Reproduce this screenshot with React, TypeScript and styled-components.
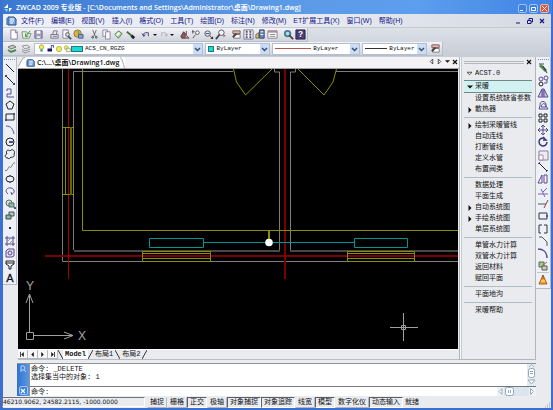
import React from "react";
import styled, { createGlobalStyle } from "styled-components";

const SANS = '"Liberation Sans", "Noto Sans CJK SC", sans-serif';
const MONO = '"Liberation Mono", "Noto Sans CJK SC", monospace';
const BOLD = '"Open Sans", "Noto Sans CJK SC", sans-serif';

const GlobalStyle = createGlobalStyle`
  * { box-sizing: border-box; }
  html, body, #root { height: 100%; margin: 0; }
  body { font-family: ${SANS}; font-size: 7px; line-height: 10px; color: #111; overflow: hidden; }
  button, select, input { font: inherit; color: inherit; margin: 0; padding: 0; border: 0; background: none; border-radius: 0; }
  svg { display: block; flex: none; }
`;

const Window = styled.div`
  height: 100vh;
  display: flex;
  flex-direction: column;
  background: #e9ebef;
  border: solid #3b70d2;
  border-width: 0 2px 2px 3px;
`;

const TitleBar = styled.header`
  flex: none;
  height: 14px;
  display: flex;
  align-items: center;
  gap: 2px;
  padding: 2px 3px 0 0;
  margin: 0 -1px;
  background: linear-gradient(90deg, #3b78d2, #5a98e4 45%, #5c9fee 75%, #3f83e4);
  color: #fff;
`;

const Title = styled.h1`
  flex: 1;
  margin: 0;
  font: 600 7px/12px ${BOLD};
  white-space: nowrap;
  overflow: hidden;
`;

const WindowButton = styled.button<{ $close?: boolean }>`
  width: 9px;
  height: 9px;
  border: 1px solid ${(p) => (p.$close ? "#f0b8a8" : "#9cc4f4")};
  border-radius: 2px;
  background: ${(p) => (p.$close ? "#d9543a" : "#3f7fe0")};
`;

const MenuBar = styled.nav`
  flex: none;
  height: 14px;
  display: flex;
  align-items: center;
  gap: 7px;
  padding: 0 3px;
  background: linear-gradient(90deg, #edf0f7, #e6e9f0 60%, #d5d9e2);
  border-bottom: 1px solid #c5c9d2;
  color: #16168a;
`;

const MenuIcon = styled.span`
  margin-right: -4px;
`;

const MenuButton = styled.button`
  white-space: nowrap;
`;

const MdiButtons = styled.div`
  display: flex;
  margin-left: auto;
`;

const ToolArea = styled.div`
  flex: none;
  padding-bottom: 1px;
  background: linear-gradient(#dde0e7, #c7ccd6);
`;

const ToolBar = styled.div`
  width: max-content;
  height: 14px;
  display: flex;
  align-items: center;
  gap: 4px;
  padding: 0 1px 0 5px;
  background: linear-gradient(#f3f4f7, #cfd3db);
  border: solid #b9bec8;
  border-width: 0 1px 1px 0;
`;

const ToolGroup = styled.div`
  display: flex;
`;

const ToolButton = styled.button<{ $narrow?: boolean }>`
  flex: none;
  width: ${(p) => (p.$narrow ? 5 : 12)}px;
  height: 12px;
  display: flex;
  align-items: center;
  justify-content: center;
`;

const PropertyBar = styled(ToolBar)`
  gap: 2px;
  width: 440px;
  max-width: 100%;
  padding: 0 1px 0 3px;
`;

const Combo = styled.label<{ $grow: number }>`
  flex: ${(p) => p.$grow} 1 0;
  min-width: 0;
  height: 12px;
  display: flex;
  align-items: center;
  padding-left: 2px;
  background: #fff;
  border: 1px solid #b4c0d2;
`;

const ComboSelect = styled.select`
  flex: 1;
  min-width: 0;
  height: 10px;
  appearance: none;
  padding-left: 2px;
  font: 6px/10px ${MONO};
`;

const LineSample = styled.span<{ $color: string; $short?: boolean }>`
  width: ${(p) => (p.$short ? 22 : 36)}px;
  height: 1px;
  background: ${(p) => p.$color};
`;

const Swatch = styled.span<{ $wide?: boolean }>`
  width: ${(p) => (p.$wide ? 12 : 6)}px;
  height: 6px;
  background: #14dcdc;
  border: 1px solid #247878;
`;

const Main = styled.div`
  flex: 1;
  min-height: 0;
  display: flex;
`;

const SideBar = styled.div<{ $right?: boolean }>`
  flex: none;
  align-self: flex-start;
  width: ${(p) => (p.$right ? 15 : 14)}px;
  display: flex;
  flex-direction: column;
  align-items: center;
  padding-top: 2px;
  background: #edf0f5;
  border: solid #b4b9c4;
  border-width: 0 1px 1px 0;
`;

const SideGrip = styled.span`
  width: 11px;
  height: 3px;
  border-top: 1px dotted #8091b4;
`;

const SideTools = styled.div<{ $right?: boolean }>`
  height: ${(p) => (p.$right ? 210 : 222)}px;
  display: grid;
  grid-auto-rows: 1fr;
  align-items: center;
`;

const ExtraTool = styled.div`
  padding: 1px 0 2px;
  border-top: 1px solid #b9c6cc;
`;

const Workspace = styled.div`
  flex: 1;
  min-width: 0;
  display: flex;
  flex-direction: column;
`;

const WorkRow = styled.div`
  flex: 1;
  min-height: 0;
  display: flex;
`;

const Document = styled.section`
  flex: 1;
  min-width: 0;
  display: flex;
  flex-direction: column;
  margin-left: 1px;
`;

const DocBar = styled.div`
  flex: none;
  height: 12px;
  display: flex;
  align-items: flex-start;
  background: #f3f3f5;
  border-bottom: 1px solid #a2a4a6;
`;

const DocTab = styled.button`
  height: 11px;
  display: flex;
  align-items: center;
  gap: 1px;
  background: #fff;
  font: 600 7px/11px ${BOLD};
  white-space: nowrap;
`;

const DocNav = styled.div`
  display: flex;
  gap: 2px;
  margin-left: auto;
  padding: 0 1px;
`;

const DocNavButton = styled.button`
  width: 6px;
  height: 9px;
  display: flex;
  align-items: center;
  justify-content: center;
`;

const Canvas = styled.div`
  flex: 1;
  min-height: 0;
  margin-right: 1px;
  background: #000;

  svg { width: 100%; height: 100%; }
`;

const LayoutTabs = styled.div`
  flex: none;
  height: 11px;
  display: flex;
  align-items: flex-start;
  border-top: 1px solid #fff;
  border-bottom: 1px solid #b8bcc4;
`;

const LayoutNav = styled.button`
  width: 10px;
  height: 9px;
  display: flex;
  align-items: center;
  justify-content: center;
  background: #f6f6f8;
  border: solid #b4b6bc;
  border-width: 0 1px 1px 0;
`;

const LayoutTab = styled.button<{ $active?: boolean }>`
  height: 9px;
  padding: 0 2px;
  background: ${(p) => (p.$active ? "#fff" : "transparent")};
  font: ${(p) => (p.$active ? "bold" : "normal")} 7px/9px ${MONO};
`;

const Panel = styled.aside`
  flex: none;
  width: 77px;
  padding: 0 3px 0 4px;
  border: solid #b0b6bc;
  border-width: 0 1px 1px;
  box-shadow: inset 1px 0 #f8f8f8, inset 2px 0 #c4cad0;
`;

const PanelHead = styled.div`
  height: 10px;
  display: flex;
  align-items: center;
  gap: 2px;
`;

const PanelGrip = styled.span`
  flex: 1;
  height: 3px;
  border: solid #b4b8be;
  border-width: 1px 0;
`;

const PanelRow = styled.button<{ $selected?: boolean; $head?: boolean }>`
  width: 100%;
  height: ${(p) => (p.$selected || p.$head ? 13 : 11)}px;
  display: flex;
  align-items: center;
  white-space: nowrap;
  font: 7px/11px ${MONO};
  background: ${(p) => (p.$selected ? "#d2f2f2" : "transparent")};
  border: solid ${(p) => (p.$selected ? "#6f8888" : "transparent")};
  border-width: ${(p) => (p.$selected ? "1px 0" : "0")};
`;

const PanelMark = styled.span`
  width: 11px;
  padding-left: 3px;
`;

const PanelRule = styled.hr`
  margin: 2px 0;
  border: 0;
  border-top: 1px solid #b3bcc2;
`;

const CommandBox = styled.section`
  flex: none;
  height: 33px;
  display: flex;
  margin-top: 3px;
  background: #fff;
  border-top: 1px solid #8e9298;
`;

const CommandGrip = styled.div`
  width: 12px;
  display: flex;
  flex-direction: column;
  align-items: center;
  justify-content: space-between;
  padding: 1px 0;
  background: linear-gradient(90deg, #2f72cc, #5a98e8);
`;

const CommandBody = styled.div`
  flex: 1;
  min-width: 0;
  display: flex;
  flex-direction: column;
  border-left: 1px solid #8e9298;
  font: 7px/8px ${MONO};
`;

const CommandHistory = styled.div`
  flex: 1;
  display: flex;
  border-bottom: 1px solid #74787e;
`;

const CommandLog = styled.p`
  flex: 1;
  margin: 0;
  padding: 1px;
  white-space: pre-line;
`;

const CommandLine = styled.label`
  height: 9px;
  display: flex;
  align-items: center;
  gap: 2px;
  padding-left: 1px;
`;

const CommandInput = styled.input`
  flex: 1;
  min-width: 0;
  height: 8px;
  outline: 0;
`;

const StatusBar = styled.footer`
  flex: none;
  height: 12px;
  display: flex;
  align-items: center;
  margin-left: -1px;
`;

const Coordinates = styled.output`
  width: 143px;
  height: 10px;
  margin-right: 2px;
  border: 1px solid;
  border-color: #70747a #fff #fff #70747a;
  font: 6px/8px "DejaVu Sans", sans-serif;
  white-space: nowrap;
`;

const StatusButton = styled.button<{ $on?: boolean }>`
  height: 11px;
  padding: 0 2px;
  border: 1px solid;
  border-color: ${(p) => (p.$on ? "#5c6066 #fff #fff #5c6066" : "transparent #b4b8be #b4b8be transparent")};
  font: 7px/8px ${SANS};
  white-space: nowrap;
`;

const StatusText = styled.span`
  padding: 0 2px;
`;

const ResizeGrip = styled.span`
  margin-left: auto;
  align-self: flex-end;
`;

const P = "#5a4a90";
const D = "#222";
const G = "#4c8c4c";

const art: Record<string, React.ReactNode> = {
  app: <><path d="M2 6 6 2v4zM7 10l3-4H7z" fill="#fff" /><path d="M5 10 2 7h4z" fill="#6de0d0" /></>,
  doc: <><path d="M2 2h6l2 2v6H2z" fill="#79a8dc" stroke="#2b4a8c" /><path d="M4 4h4M4 6h4M4 8h3" stroke="#fff" /><path d="M1 3v7" stroke="#35589c" /></>,
  page: <path d="M2 1h5l2 2v8H2zM7 1v3h2" fill="#fdfdff" stroke="#85809c" />,
  open: <><path d="M1 3h5l1 2h4L9 10H2z" fill="#e8eddc" stroke="#7c9672" /><path d="m5 8 5-6M5 8h3M5 8V5" stroke="#318c3c" /></>,
  save: <><path d="M2 2h8v8H2z" fill="#a49fc0" stroke="#6d668c" /><path d="M4 2h4v3H4z" fill="#fff" /><path d="M4 8h4v2H4z" fill="#eee" /></>,
  print: <><path d="M2 6h8v4H2zM4 6l1-4h4L8 6" fill="#e8e6ee" stroke="#777090" /><path d="M4 8h5" stroke="#777090" /></>,
  preview: <><path d="M2 1h6v9H2z" fill="#f8f8fc" stroke="#85809c" /><circle cx="7" cy="6" r="2" fill="#cfe4f6" stroke="#555" /><path d="m8 8 3 3" stroke="#555" strokeWidth="2" /></>,
  plot: <><circle cx="5" cy="5" r="4" fill="#e0b040" stroke="#8d7040" /><path d="M5 2a3 3 0 0 1 1 5z" fill="#4ca058" /><path d="M6 6h5v4H6z" fill="#7ba4dc" stroke="#4a5c90" /></>,
  cut: <><path d="m4 1 3 7M8 1 5 8" stroke="#666" /><circle cx="4" cy="9" r="1" stroke="#444" fill="none" /><circle cx="8" cy="9" r="1" stroke="#444" fill="none" /></>,
  copy: <><path d="M2 1h5v7H2z" fill="#f7f7fd" stroke="#8a84a4" /><path d="M5 3h5v8H5z" fill="#f7f7fd" stroke="#8a84a4" /></>,
  paste: <><path d="m2 6 4-4 4 3-4 5z" fill="#b6d8a0" stroke="#4f744c" /><path d="m4 7 3-3" stroke="#fff" strokeWidth="2" /></>,
  brush: <><path d="m2 3 5 4" stroke="#4c6c3c" strokeWidth="2" /><path d="m7 7 3 3" stroke="#222" strokeWidth="3" /></>,
  undo: <path d="M3 8V5l2-1h3v4M1 5l2 3 2-2" fill="none" stroke="#473a80" />,
  redo: <path d="M9 8V5L7 4H4v4M11 5 9 8 7 6" fill="none" stroke="#b0b0bc" />,
  pan: <><path d="m2 8 3-5 2 2v5H3z" fill="#8a5a5c" stroke="#553a44" /><path d="M8 2v5l3 3H7" fill="#c7a890" stroke="#664a50" /></>,
  zoomplus: <><circle cx="7" cy="4" r="2" fill="#fff" stroke="#555" /><path d="m5 6-3 4M1 3h3M2 1v4" stroke="#555" /></>,
  zoomwin: <><circle cx="5" cy="5" r="3" fill="#dbeaf4" stroke="#50506c" /><path d="m7 7 3 3M3 5h4" stroke="#445" strokeWidth="1" /><path d="M8 11h3V8z" fill="#333" /></>,
  zoomprev: <><circle cx="7" cy="4" r="3" fill="#f5f7fb" stroke="#50506c" /><path d="m5 6-4 5" stroke="#445" strokeWidth="2" /><path d="M9 7h2L9 9" fill="none" stroke="#b44" /></>,
  props: <><path d="M2 2h8v3H2z" fill="#e8b4a0" stroke="#7c5c68" /><path d="M3 6h7v4H3z" fill="#fff" stroke="#777" /><path d="m2 9 4-4" stroke="#444" strokeWidth="2" /></>,
  grid: <><path d="M1 1h10v10H1z" fill="#f5f5fb" stroke="#77728c" /><path d="M3 3h2M7 3h2M3 6h2M7 6h2M3 9h2M7 9h2" stroke="#55506c" strokeWidth="2" /></>,
  palette: <><path d="M5 1h5v9H5z" fill="#6c88c8" stroke="#345" /><path d="M1 10V6l3-2v6z" fill="#e4c45c" stroke="#666" /><path d="M6 3h3M6 6h3" stroke="#fff" /></>,
  table: <><path d="M1 2h10v8H1z" fill="#fff" stroke="#857c94" /><path d="M1 3h10" stroke="#b08c94" strokeWidth="2" /><path d="M3 6h6M3 8h6" stroke="#888" /></>,
  find: <><circle cx="5" cy="5" r="3" fill="#aee0ea" stroke="#467c94" strokeWidth="2" /><path d="m7 7 4 4" stroke="#444" strokeWidth="2" /></>,
  help: <path d="M1 1h10v10H1z" fill="#4c4070" stroke="#28204c" />,
  layer: <><path d="m2 4 5-2 3 2-5 2z" fill="#ccc" stroke="#777" /><path d="m2 7 3 2 5-2" fill="none" stroke={G} strokeWidth="2" /></>,
  layer2: <path d="m2 3 5-1 3 2-5 2zM2 6l3 2 5-2M2 8l3 2 5-2" fill="#e5e5ea" stroke="#999" />,
  bulb: <><circle cx="6" cy="4" r="3" fill="#f4ec50" stroke="#9a9a50" /><path d="M6 7v3" stroke="#3a90a0" strokeWidth="3" /></>,
  lock: <><path d="M2 6h6v4H2z" fill="#14146c" /><path d="M7 6V2h3v3" fill="none" stroke="#14146c" /></>,
  sun: <circle cx="6" cy="6" r="4" fill="#f0ec58" stroke="#a89a44" />,
  sun2: <><circle cx="5" cy="4" r="3" fill="#f0ec58" stroke="#a89a44" /><path d="M5 5h6v5H5z" fill="#f4f4d0" stroke="#999060" /></>,
  line: <path d="m2 2 8 8" stroke={D} />,
  ray: <><path d="m2 2 8 8" stroke={D} strokeWidth="1" /><path d="M1 2h2M9 10h2" stroke="#446" strokeWidth="2" /></>,
  pline: <path d="M10 10H3V7h4V2H3v2" fill="none" stroke={P} />,
  polygon: <path d="m6 2 4 3-2 5H4L2 5z" fill="none" stroke={D} />,
  rect: <><path d="M2 3h8v6H2z" fill="none" stroke={D} /><path d="M1 9h2M9 3h2" stroke={P} strokeWidth="2" /></>,
  arc: <path d="M2 2c5 0 7 3 8 8" fill="none" stroke={P} strokeWidth="1" />,
  circle: <><circle cx="6" cy="6" r="4" fill="none" stroke={D} /><path d="M5 6h4" stroke={P} strokeWidth="2" /></>,
  cloud: <path d="M4 10C0 10 1 6 3 6 1 3 4 1 6 3c2-3 6 0 4 3 1 2-1 4-3 3-1 2-3 2-3 1z" fill="none" stroke={D} />,
  spline: <path d="M1 9c3 3 3-5 5-3s2-5 5-4" fill="none" stroke="#777" />,
  ellipse: <><ellipse cx="6" cy="6" rx="4" ry="3" fill="none" stroke={D} /><path d="M2 6h1M6 2v1M6 9v1M9 6h1" stroke={P} strokeWidth="2" /></>,
  earc: <path d="M4 9C0 6 3 2 7 3s4 5 1 6M7 7l1 3" fill="none" stroke={P} />,
  insert: <><circle cx="5" cy="5" r="3" fill="#cfe0d0" stroke="#667" /><path d="M5 5h5v4H5z" fill="#8ac08a" stroke="#567" /><path d="M11 9v2" stroke={P} strokeWidth="2" /></>,
  block: <><path d="M5 2h5v4H5z" fill="#a6d8a6" stroke="#446" /><path d="M2 5h5v4H2z" fill="#8abc8a" stroke="#446" /></>,
  point: <path d="M5 6h2" stroke="#224" strokeWidth="2" />,
  hatch: <><path d="M3 1v10M9 1v10M1 3h10M1 9h10" stroke={P} /><path d="m3 7 4-4M5 9l4-4" stroke="#99a" /></>,
  region: <><path d="M2 4 4 2h6v7l-2 1H2z" fill="#e2deee" stroke={P} /><circle cx="6" cy="6" r="2" fill="none" stroke={P} /></>,
  wipe: <path d="M2 2h8v3l-3 2v3H5V7L2 5zM2 4h8" fill="#f4f4f4" stroke={D} />,
  letter: <text x="6" y="10" textAnchor="middle" fontFamily="Liberation Sans, sans-serif" fontSize="11" fill="#111" stroke="#111" strokeWidth="0.3">A</text>,
  erase: <><path d="M2 2h5" stroke="#446" /><path d="m3 3 6 6" stroke={G} strokeWidth="3" /><path d="m6 4 4 7" stroke="#333" /></>,
  copyobj: <><circle cx="4" cy="4" r="2" fill="none" stroke={P} /><circle cx="4" cy="9" r="2" fill="none" stroke={D} /><circle cx="9" cy="3" r="2" fill="none" stroke={P} /><path d="M7 8h3V5" stroke={P} fill="none" /></>,
  mirror: <path d="M5 2v8H1zM7 2v8h4zM6 1v10" fill="#ccd" stroke={P} />,
  offset: <path d="M2 10h9L9 7C10 1 2 1 3 7zM4 8h5C8 3 5 4 4 8" fill="none" stroke={P} />,
  array: <path d="M2 2h3v3H2zM7 2h3v3H7zM2 7h3v3H2zM7 7h3v3H7z" fill="none" stroke={D} />,
  move: <path d="M6 1v10M1 6h10M4 3l2-2 2 2M4 9l2 2 2-2M3 4 1 6l2 2M9 4l2 2-2 2" fill="none" stroke={P} />,
  rotate: <path d="M10 6a4 4 0 1 1-2-3.500M6 1l3 3H6" fill="none" stroke="#3c3470" strokeWidth="1.500" />,
  scale: <><path d="M2 2h9v9H2z" fill="#f3e9ee" stroke="#8c80a4" /><path d="M2 6h4v5H2z" fill="#fff" stroke="#a08ca4" /></>,
  stretch: <><path d="m2 2 8 8" stroke={D} /><path d="m1 3 2-2M9 11l2-2" stroke={P} /></>,
  lengthen: <path d="M1 10 5 2v8zM7 10V2h3v8z" fill="#f5f5fb" stroke={P} />,
  trim: <path d="M1 8h10M4 3l4 8M6 6l4-4" stroke="#7c62b4" fill="none" />,
  extend: <><path d="M1 6h8" stroke="#555" /><path d="m7 10 4-8" stroke="#8c3c3c" strokeWidth="1" /></>,
  brk: <><path d="M2 3h8v6H2z" fill="none" stroke="#334" /><path d="M9 6h2" stroke={P} strokeWidth="2" /></>,
  brk2: <path d="M5 2H2v8h2M7 2h3v8H7" fill="none" stroke="#334" />,
  chamfer: <path d="M2 2h3l5 5v4" fill="none" stroke="#555" />,
  fillet: <path d="M1 2c5 0 9 3 9 9" fill="none" stroke={P} strokeWidth="1.500" />,
  explode: <><path d="M2 2h5v5H2z" fill="#9cc88c" stroke="#665" /><path d="M5 6h5v4H5z" fill="#d0d8a0" stroke="#556" /><path d="m6 5 4-3" stroke="#a64" /></>,
  cone: <><path d="M6 1 2 10h8z" fill="#f0a428" stroke="#b05c20" /><path d="M4 7h4" stroke="#fff090" /><path d="M6 1v4" stroke="#a43" /></>,
};

function Icon({ name, size = 12 }: { name: string; size?: number }) {
  return (
    <svg width={size} height={size} viewBox="0 0 12 12" fill="none" aria-hidden="true">
      {art[name]}
      {name === "help" && (
        <text x="6" y="9" textAnchor="middle" fontSize="9" fontWeight="bold" fill="#fff">?</text>
      )}
    </svg>
  );
}

type Dir = "left" | "right" | "down";
function Triangle({ dir, bar, hollow, size = 6 }: { dir: Dir; bar?: boolean; hollow?: boolean; size?: number }) {
  const d = { left: "M4.500 0v6L1.500 3z", right: "M1.500 0v6l3-3z", down: "M0 1.500h6l-3 3z" }[dir];
  return (
    <svg width={size} height={size} viewBox="0 0 6 6" aria-hidden="true">
      <path d={d} fill={hollow ? "#fff" : "#111"} stroke={hollow ? "#333" : "none"} />
      {bar && <path d={dir === "left" ? "M.5 0v6" : "M5.500 0v6"} stroke="#111" />}
    </svg>
  );
}

function Cross({ color = "#111" }: { color?: string }) {
  return (
    <svg width="6" height="6" viewBox="0 0 6 6" aria-hidden="true">
      <path d="m1 1 4 4M5 1 1 5" stroke={color} strokeWidth="1.200" />
    </svg>
  );
}

function DropArrow() {
  return (
    <svg width="9" height="10" viewBox="0 0 9 10" aria-hidden="true">
      <path d="M0 0h9v10H0z" fill="#cbdcf6" />
      <path d="m2 4 2.500 2.500L7 4" fill="none" stroke="#3a4c70" strokeWidth="1.500" />
    </svg>
  );
}

const menus = ["文件(F)", "编辑(E)", "视图(V)", "插入(I)", "格式(O)", "工具(T)", "绘图(D)", "标注(N)", "修改(M)", "ET扩展工具(X)", "窗口(W)", "帮助(H)"];

const toolGroups = [
  ["page", "open", "save"],
  ["print", "preview", "plot"],
  ["cut", "copy", "paste", "brush"],
  ["undo", "drop", "redo", "drop"],
  ["pan", "zoomplus", "zoomwin", "zoomprev"],
  ["props", "grid", "palette", "table"],
  ["find", "help"],
];

const drawTools = ["line", "ray", "pline", "polygon", "rect", "arc", "circle", "cloud", "spline", "ellipse", "earc", "insert", "block", "point", "hatch", "region", "wipe", "letter"];
const editTools = ["erase", "copyobj", "mirror", "offset", "array", "move", "rotate", "scale", "stretch", "lengthen", "trim", "extend", "brk", "brk2", "chamfer", "fillet", "explode"];

const panelGroups: { label: string; sub?: boolean }[][] = [
  [{ label: "设置系统缺省参数" }, { label: "散热器", sub: true }],
  [{ label: "绘制采暖管线", sub: true }, { label: "自动连线" }, { label: "打断管线" }, { label: "定义水管" }, { label: "布置阀类" }],
  [{ label: "数据处理" }, { label: "平面生成" }, { label: "自动系统图", sub: true }, { label: "手绘系统图", sub: true }, { label: "单层系统图" }],
  [{ label: "单管水力计算" }, { label: "双管水力计算" }, { label: "返回材料" }, { label: "赋回平面" }],
  [{ label: "平面地沟" }],
  [{ label: "采暖帮助" }],
];

const statusItems = [
  { label: "捕捉" }, { label: "栅格" }, { label: "正交", on: true }, { label: "极轴" },
  { label: "对象捕捉", on: true }, { label: "对象追踪", on: true }, { label: "线宽" },
  { label: "模型", on: true }, { label: "数字化仪" }, { label: "动态输入", on: true },
];

function FloorPlan() {
  return (
    <svg viewBox="18 69 440 280" preserveAspectRatio="xMinYMin meet" fill="none" role="img" aria-label="Drawing1.dwg">
      <g stroke="#7c7c7c">
        <path d="M62.500 69v192.500H458M73.500 250V71.500H233M336 71.500h122" />
        <path d="M274.500 69v3h5v179M295.500 69v3h-5v179" />
        <path d="M74 251H280M290 251h168" stroke="#484848" strokeWidth="2" />
      </g>
      <g stroke="#780000" strokeWidth="2">
        <path d="M285 69v210M45 256h413" />
        <path d="M68.500 69v210" stroke="#a00000" strokeWidth="1" />
      </g>
      <g stroke="#8c8c00">
        <path d="M82.500 69v161.500H458" />
        <path d="M62.500 127.500h11v67h-11zM65.500 127v68" />
        <path d="M71 127v68" stroke="#666600" strokeWidth="2" />
        <path d="M142.500 251.500h68v10h-68zM142 253.500h68M142 258.500h68" />
        <path d="M347.500 251.500h67v10h-67zM347 253.500h68M347 258.500h68" />
        <path d="m233.500 69 3 13 9 13L272 69M298 69l26 26 9-13 3.500-13" />
        <path d="M269 231v8" strokeWidth="2" />
      </g>
      <g stroke="#009494">
        <path d="M149.500 238.500h54v9h-54zM354.500 238.500h53v9h-53zM204 242.500h150" />
      </g>
      <circle cx="269" cy="242.500" r="3.800" fill="#fff" />
      <g stroke="#a0a0a0">
        <path d="M26.500 332.500h7v7h-7zM29.500 332v-38m-3.500 9L29.500 294l3.500 9M34 335.500h39m-9-3.500 9 3.500-9 3.500" />
        <path d="M390 327.500h28M403.500 313v28M401.500 325.500h4v4h-4z" />
      </g>
      <g fill="#a8a8a8" fontFamily="Liberation Sans, sans-serif" fontSize="12" textAnchor="middle">
        <text x="30" y="290">Y</text>
        <text x="82" y="340">X</text>
      </g>
    </svg>
  );
}

function Slash({ back }: { back?: boolean }) {
  return (
    <svg width="5" height="9" viewBox="0 0 5 9" aria-hidden="true">
      <path d={back ? "m0 0 5 9" : "M5 0 0 9"} stroke="#333" />
    </svg>
  );
}

function HistoryScroll() {
  return (
    <svg width="9" height="22" viewBox="0 0 9 22" aria-hidden="true">
      <path d="M0 0h9v22H0z" fill="#e2ebf4" />
      <path d="m2 3 2.500-2L7 3M1 16h7l-3.500 4z" fill="#fff" stroke="#9aaab8" />
      <rect x="1.500" y="4.500" width="6" height="9" rx="2" fill="#fff" stroke="#8fa8bc" />
      <path d="M3 7.500h3M3 9.500h3" stroke="#8fa8bc" />
    </svg>
  );
}

function LineScroll() {
  return (
    <svg width="39" height="9" viewBox="0 0 39 9" aria-hidden="true">
      <path d="M0 0h39v9H0z" fill="#dbe5ee" />
      <path d="M0 0h7v9H0zM32 0h7v9h-7z" fill="#eef3f8" />
      <path d="M5 1.500v6l-3-3zM33.500 1.500v6l3-3z" fill="#fff" stroke="#9aaab8" />
      <rect x="8.500" y=".5" width="8" height="8" rx="2" fill="#fff" stroke="#8fa8bc" />
      <path d="M11.500 3v3M13.500 3v3" stroke="#8fa8bc" />
    </svg>
  );
}

export default function App() {
  return (
    <>
      <GlobalStyle />
      <Window>
        <TitleBar>
          <Icon name="app" />
          <Title>ZWCAD 2009 专业版 - [C:\Documents and Settings\Administrator\桌面\Drawing1.dwg]</Title>
          <WindowButton aria-label="Minimize">
            <svg width="7" height="7" viewBox="0 0 7 7"><path d="M1 5.500h3" stroke="#fff" /></svg>
          </WindowButton>
          <WindowButton aria-label="Restore">
            <svg width="7" height="7" viewBox="0 0 7 7"><path d="M1.500 2.500h4v3h-4z" fill="none" stroke="#fff" /></svg>
          </WindowButton>
          <WindowButton $close aria-label="Close">
            <svg width="7" height="7" viewBox="0 0 7 7"><path d="m1 1 5 5M6 1 1 6" stroke="#fff" /></svg>
          </WindowButton>
        </TitleBar>

        <MenuBar>
          <MenuIcon><Icon name="doc" /></MenuIcon>
          {menus.map((m) => <MenuButton key={m}>{m}</MenuButton>)}
          <MdiButtons>
            <ToolButton aria-label="Minimize drawing">
              <svg width="6" height="6" viewBox="0 0 6 6"><path d="M1 5h4" stroke="#16168a" /></svg>
            </ToolButton>
            <ToolButton aria-label="Restore drawing">
              <svg width="6" height="6" viewBox="0 0 6 6"><path d="M2 2V.5h3.500V4H4M.5 2.500H4v3H.5z" fill="none" stroke="#16168a" /></svg>
            </ToolButton>
            <ToolButton aria-label="Close drawing"><Cross color="#16168a" /></ToolButton>
          </MdiButtons>
        </MenuBar>

        <ToolArea>
          <ToolBar>
            {toolGroups.map((group) => (
              <ToolGroup key={group[0]}>
                {group.map((name, i) => (
                  <ToolButton key={i} $narrow={name === "drop"} aria-label={name}>
                    {name === "drop" ? <Triangle dir="down" size={4} /> : <Icon name={name} size={11} />}
                  </ToolButton>
                ))}
              </ToolGroup>
            ))}
          </ToolBar>
          <PropertyBar>
            <ToolButton aria-label="Layers"><Icon name="layer" /></ToolButton>
            <ToolButton aria-label="Layer states"><Icon name="layer2" /></ToolButton>
            <Combo $grow={169}>
              <Icon name="bulb" size={9} />
              <Icon name="lock" size={9} />
              <Icon name="sun" size={8} />
              <Icon name="sun2" size={8} />
              <Swatch $wide />
              <ComboSelect aria-label="Layer"><option>ACS_CN_RGZG</option></ComboSelect>
              <DropArrow />
            </Combo>
            <Combo $grow={62}>
              <Swatch />
              <ComboSelect aria-label="Color"><option>ByLayer</option></ComboSelect>
              <DropArrow />
            </Combo>
            <Combo $grow={86}>
              <LineSample $color="#b05858" />
              <ComboSelect aria-label="Linetype"><option>ByLayer</option></ComboSelect>
              <DropArrow />
            </Combo>
            <Combo $grow={62}>
              <LineSample $color="#333" $short />
              <ComboSelect aria-label="Lineweight"><option>ByLayer</option></ComboSelect>
              <DropArrow />
            </Combo>
            <ToolButton aria-label="Match properties"><Icon name="props" size={11} /></ToolButton>
          </PropertyBar>
        </ToolArea>

        <Main>
          <SideBar>
            <SideGrip />
            <SideTools>
              {drawTools.map((n) => <ToolButton key={n} aria-label={n}><Icon name={n} size={12} /></ToolButton>)}
            </SideTools>
          </SideBar>

          <Workspace>
            <WorkRow>
              <Document>
                <DocBar>
                  <DocTab>
                    <svg width="7" height="11" viewBox="0 0 7 11"><path d="M0 0h5L0 9z" fill="#e9ebef" /><path d="M7 .5 5 1 0 10" fill="none" stroke="#a4a6a8" /></svg>
                    <Icon name="doc" size={10} />
                    C:\...\桌面\Drawing1.dwg
                    <svg width="5" height="11" viewBox="0 0 5 11"><path d="M0 .5c2 0 3 6 4.500 10.500" fill="none" stroke="#a4a6a8" /></svg>
                  </DocTab>
                  <DocNav>
                    <DocNavButton aria-label="Previous tab"><Triangle dir="left" hollow size={5} /></DocNavButton>
                    <DocNavButton aria-label="Next tab"><Triangle dir="right" hollow size={5} /></DocNavButton>
                    <DocNavButton aria-label="Tab list"><Triangle dir="down" size={5} /></DocNavButton>
                    <DocNavButton aria-label="Close tab"><Cross /></DocNavButton>
                  </DocNav>
                </DocBar>
                <Canvas><FloorPlan /></Canvas>
                <LayoutTabs>
                  <LayoutNav aria-label="First"><Triangle dir="left" bar size={5} /></LayoutNav>
                  <LayoutNav aria-label="Previous"><Triangle dir="left" size={5} /></LayoutNav>
                  <LayoutNav aria-label="Next"><Triangle dir="right" size={5} /></LayoutNav>
                  <LayoutNav aria-label="Last"><Triangle dir="right" bar size={5} /></LayoutNav>
                  <Slash back />
                  <LayoutTab $active>Model</LayoutTab>
                  <Slash />
                  <LayoutTab>布局1</LayoutTab>
                  <Slash back />
                  <LayoutTab>布局2</LayoutTab>
                  <Slash />
                </LayoutTabs>
              </Document>

              <Panel>
                <PanelHead>
                  <PanelGrip />
                  <DocNavButton aria-label="Close panel"><Cross /></DocNavButton>
                </PanelHead>
                <PanelRow $head><PanelMark><Triangle dir="down" hollow size={5} /></PanelMark>ACST.0</PanelRow>
                <PanelRow $selected><PanelMark><Triangle dir="down" /></PanelMark>采暖</PanelRow>
                {panelGroups.map((group, i) => (
                  <React.Fragment key={i}>
                    {i > 0 && <PanelRule />}
                    {group.map((row) => (
                      <PanelRow key={row.label}>
                        <PanelMark>{row.sub && <Triangle dir="right" />}</PanelMark>
                        {row.label}
                      </PanelRow>
                    ))}
                  </React.Fragment>
                ))}
              </Panel>
            </WorkRow>

            <CommandBox>
              <CommandGrip>
                <svg width="8" height="8" viewBox="0 0 8 8"><path d="M2 1v6M2 1h3l1 2-1 2H2M5 5l2 2" fill="none" stroke="#b8d4f8" /></svg>
                <WindowButton aria-label="Close command window"><Cross color="#fff" /></WindowButton>
              </CommandGrip>
              <CommandBody>
                <CommandHistory>
                  <CommandLog>{"命令: _DELETE\n选择集当中的对象: 1"}</CommandLog>
                  <HistoryScroll />
                </CommandHistory>
                <CommandLine>
                  命令:
                  <CommandInput type="text" />
                  <LineScroll />
                </CommandLine>
              </CommandBody>
            </CommandBox>
          </Workspace>

          <SideBar $right>
            <SideGrip />
            <SideTools $right>
              {editTools.map((n) => <ToolButton key={n} aria-label={n}><Icon name={n} size={12} /></ToolButton>)}
            </SideTools>
            <ExtraTool><ToolButton aria-label="Render"><Icon name="cone" /></ToolButton></ExtraTool>
          </SideBar>
        </Main>

        <StatusBar>
          <Coordinates>46210.9062, 24582.2115, -1000.0000</Coordinates>
          {statusItems.map((s) => (
            <StatusButton key={s.label} $on={s.on} aria-pressed={!!s.on}>{s.label}</StatusButton>
          ))}
          <StatusText>就绪</StatusText>
          <ResizeGrip>
            <svg width="6" height="6" viewBox="0 0 6 6"><path d="M4 1h1M4 3h1M2 3h1M4 5h1M2 5h1M0 5h1" stroke="#9aa0a8" /></svg>
          </ResizeGrip>
        </StatusBar>
      </Window>
    </>
  );
}
